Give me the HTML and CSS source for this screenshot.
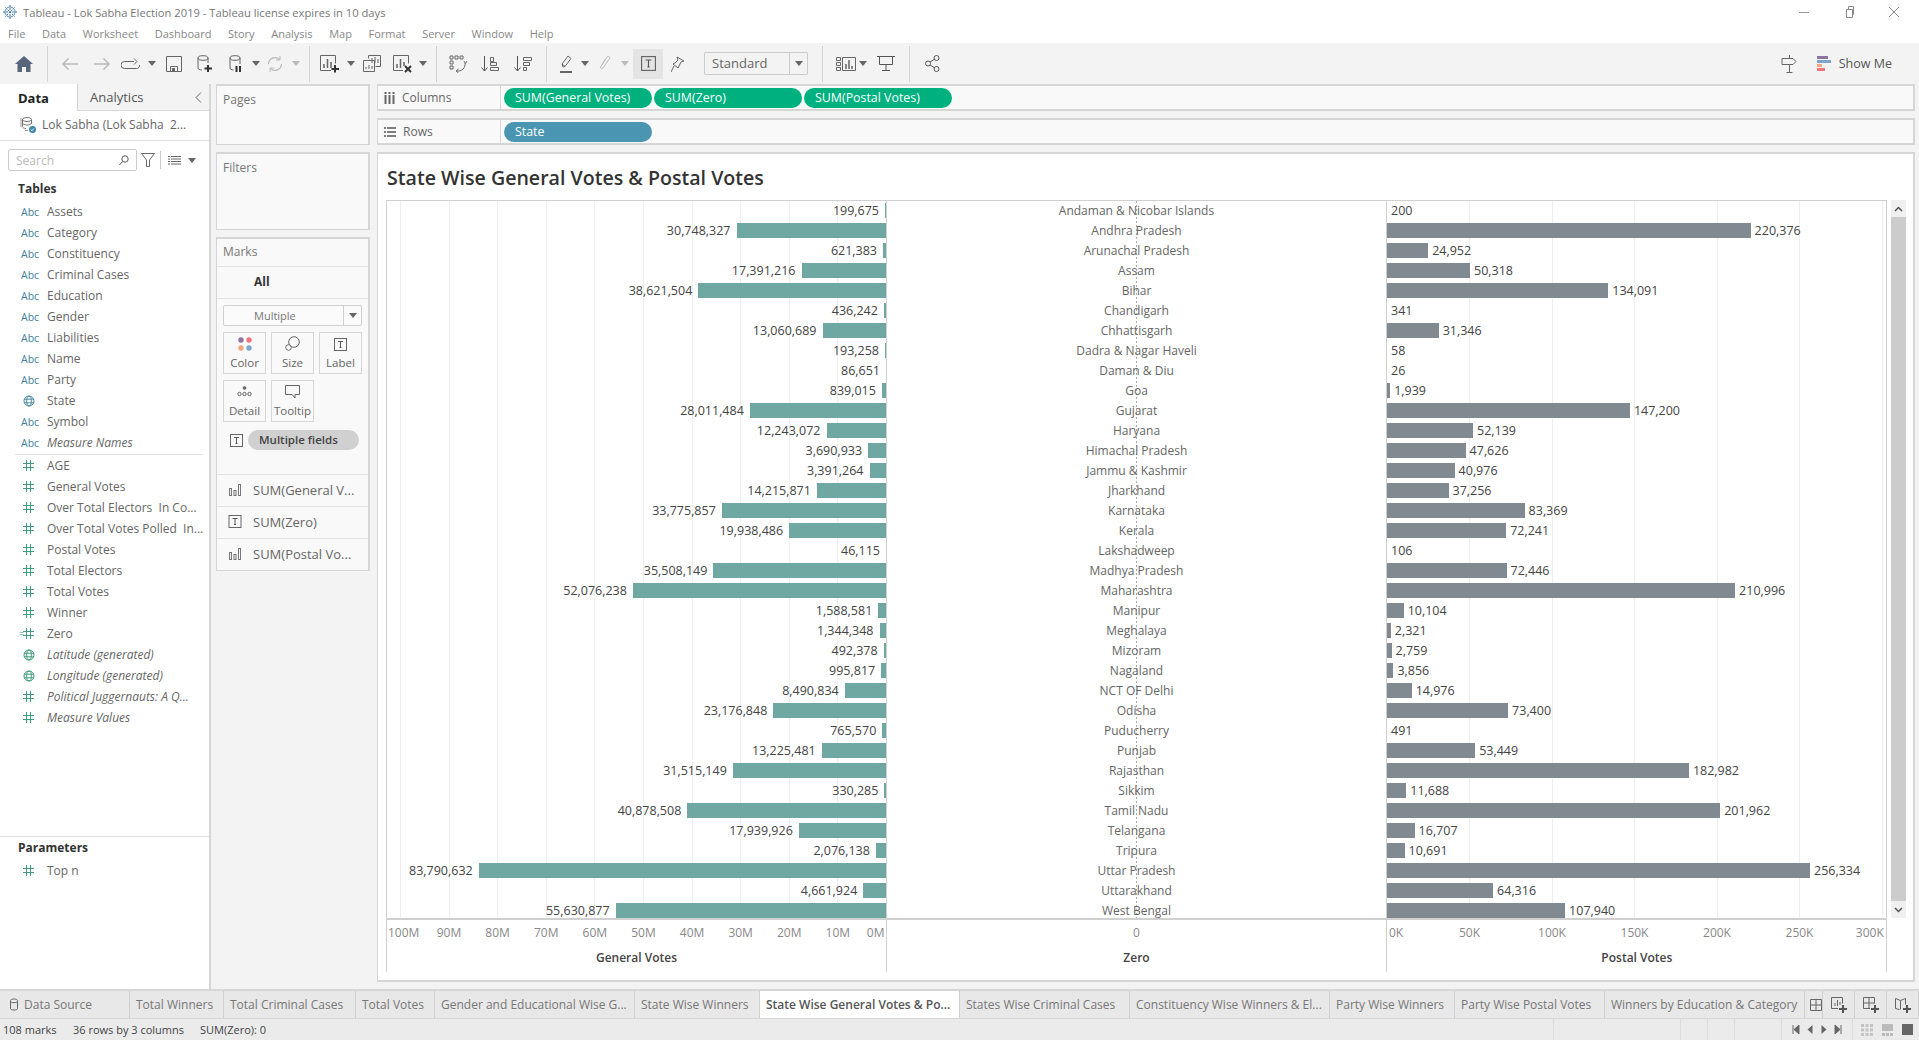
FILE: index.html
```html
<!DOCTYPE html>
<html>
<head lang="en">
    <meta charset="UTF-8">
    <title>Tableau - Lok Sabha Election 2019</title>
    <link rel="stylesheet" href="styles.css">
</head>
<body>
<svg class="defs" width="0" height="0">
    <symbol id="hash" viewBox="0 0 11 11"><path d="M3.5 0v11M7.5 0v11M0 3.5h11M0 7.5h11" fill="none" stroke="#3f9d7c"/></symbol>
    <symbol id="globe-b" viewBox="0 0 12 12"><g fill="none" stroke="#4b8aa5"><circle cx="6" cy="6" r="5"/><ellipse cx="6" cy="6" rx="2.3" ry="5"/><path d="M1 4.2h10M1 7.8h10"/></g></symbol>
    <symbol id="globe-g" viewBox="0 0 12 12"><g fill="none" stroke="#3f9d7c"><circle cx="6" cy="6" r="5"/><ellipse cx="6" cy="6" rx="2.3" ry="5"/><path d="M1 4.2h10M1 7.8h10"/></g></symbol>
    <symbol id="caret" viewBox="0 0 8 5"><path d="M0 0h8L4 5z" fill="#666"/></symbol>
    <symbol id="caret-off" viewBox="0 0 8 5"><path d="M0 0h8L4 5z" fill="#bbb"/></symbol>
    <symbol id="tbox" viewBox="0 0 13 13"><rect x=".5" y=".5" width="12" height="12" fill="none" stroke="#666"/><path d="M4 3.5h5M6.5 3.5v6M5.5 9.5h2" fill="none" stroke="#555"/></symbol>
    <symbol id="bars" viewBox="0 0 12 12"><g fill="none" stroke="#777"><rect x=".5" y="4.5" width="2" height="7"/><rect x="5" y="6.5" width="2" height="5"/><rect x="9.5" y=".5" width="2" height="11"/></g></symbol>
</svg>

<div class="titlebar">
    <svg class="app-ico" width="14" height="14" viewBox="0 0 14 14"><path d="M7 0v14M0 7h14M2.500 2.500l9 9M11.500 2.500l-9 9" stroke="#3f6f9e" stroke-dasharray="2 1" fill="none"/><circle cx="7" cy="7" r="5" fill="none" stroke="#5a8fc0"/></svg>
    <span class="title-text">Tableau - Lok Sabha Election 2019 - Tableau license expires in 10 days</span>
    <div class="winbtns">
        <svg width="12" height="12" viewBox="0 0 12 12"><path d="M1 6.500h10" stroke="#999"/></svg>
        <svg width="12" height="12" viewBox="0 0 12 12"><path d="M3.500 3.500h6v8h-6zM5.500 3.500v-3h5v8h-1" fill="none" stroke="#888"/></svg>
        <svg width="12" height="12" viewBox="0 0 12 12"><path d="M1 1l10 10M11 1L1 11" stroke="#888" fill="none"/></svg>
    </div>
</div>
<div class="menubar">
    <span>File</span><span>Data</span><span>Worksheet</span><span>Dashboard</span><span>Story</span><span>Analysis</span><span>Map</span><span>Format</span><span>Server</span><span>Window</span><span>Help</span>
</div>

<div class="toolbar">
    <div class="tb w32"><svg width="18" height="16" viewBox="0 0 18 16"><path d="M9 0L0 8h2.500v8H7v-5h4v5h4.500V8H18z" fill="#56657a"/></svg></div>
    <div class="tb w14"><i class="sep"></i></div>
    <div class="tb w32"><svg width="18" height="14" viewBox="0 0 18 14"><path d="M17 7H2M7.500 1.500L2 7l5.500 5.500" fill="none" stroke="#bbb" stroke-width="1.600"/></svg></div>
    <div class="tb w32"><svg width="18" height="14" viewBox="0 0 18 14"><path d="M1 7h15M10.500 1.500L16 7l-5.500 5.500" fill="none" stroke="#bbb" stroke-width="1.600"/></svg></div>
    <div class="tb w26"><svg width="20" height="12" viewBox="0 0 20 12"><path d="M13 3.500H3.500a3 3 0 0 0 0 7h12a3 3 0 0 0 3-3.500M13 .5l3 3-3 3" fill="none" stroke="#666"/></svg></div>
    <div class="tb w16"><svg class="car"><use href="#caret"/></svg></div>
    <div class="tb w28"><svg width="16" height="16" viewBox="0 0 16 16"><path d="M.5.5h15v15H.5zM4.500 15.500v-5h7v5" fill="none" stroke="#666"/><rect x="6" y="12" width="3" height="3" fill="#666"/></svg></div>
    <div class="tb w34"><svg width="16" height="18" viewBox="0 0 16 18"><path d="M1 3v10c0 1.200 2 2 4 2M11 3v5" fill="none" stroke="#666"/><ellipse cx="6" cy="3" rx="5" ry="2.300" fill="none" stroke="#666"/><path d="M11 10v7M7.500 13.500h7.500" stroke="#333" stroke-width="2"/></svg></div>
    <div class="tb w28"><svg width="14" height="18" viewBox="0 0 14 18"><path d="M1 3v10c0 1.200 1.500 2 3.500 2M11 3v6" fill="none" stroke="#666"/><ellipse cx="6" cy="3" rx="5" ry="2.300" fill="none" stroke="#666"/><path d="M7.500 11v6M11 11v6" stroke="#333" stroke-width="2"/></svg></div>
    <div class="tb w12"><svg class="car"><use href="#caret"/></svg></div>
    <div class="tb w26"><svg width="18" height="18" viewBox="0 0 18 18"><path d="M2.500 9a6.500 6.500 0 0 1 11-4.500M15.500 9a6.500 6.500 0 0 1-11 4.500" fill="none" stroke="#bbb" stroke-width="1.300"/><path d="M14 1v4h-4M4 17v-4h4" fill="none" stroke="#bbb"/></svg></div>
    <div class="tb w16"><svg class="car"><use href="#caret-off"/></svg></div>
    <div class="tb w10"><i class="sep"></i></div>
    <div class="tb w32"><svg width="20" height="18" viewBox="0 0 20 18"><path d="M.5 15.500v-15h15v8M11 15.500H.5" fill="none" stroke="#666"/><path d="M4 13V9M7.500 13V4M11 13V7" stroke="#666" stroke-width="1.500"/><path d="M15 10v7.500M11.500 14h7.500" stroke="#333" stroke-width="2"/></svg></div>
    <div class="tb w10"><svg class="car"><use href="#caret"/></svg></div>
    <div class="tb w32"><svg width="18" height="17" viewBox="0 0 18 17"><path d="M5.500 3.500v-3h12v11h-5M.5 5.500h11v11H.5z" fill="none" stroke="#666"/><path d="M9 8V3M12 8V2M15 8V4M3 14v-2M6 14v-4M9 14v-3" stroke="#666"/></svg></div>
    <div class="tb w30"><svg width="20" height="18" viewBox="0 0 20 18"><path d="M.5 15.500v-15h15v8M10 15.500H.5" fill="none" stroke="#666"/><path d="M4 13V9M7.500 13V4M11 11V7" stroke="#666" stroke-width="1.500"/><path d="M12 11l6 6M18 11l-6 6" stroke="#333" stroke-width="2"/></svg></div>
    <div class="tb w10"><svg class="car"><use href="#caret"/></svg></div>
    <div class="tb w16"><i class="sep"></i></div>
    <div class="tb w28"><svg width="18" height="18" viewBox="0 0 18 18"><path d="M1 1h3v3H1zM6 1h3v3H6zM11 1h3v3h-3zM1 6h3v3H1zM1 11h3v3H1z" fill="none" stroke="#666"/><path d="M16 8a7 7 0 0 1-8 8M15 6l1.500 2.500L18 6M9.500 14L7 16l2.500 2" fill="none" stroke="#666"/></svg></div>
    <div class="tb w36"><svg width="18" height="16" viewBox="0 0 18 16"><path d="M3.500 0v15M.5 11.500l3 3.500 3-3.500" fill="none" stroke="#555"/><path d="M9.500 1.500h3v4h-3zM9.500 6.500h6v3h-6zM9.500 11.500h8v3h-8z" fill="none" stroke="#666"/></svg></div>
    <div class="tb w30"><svg width="18" height="16" viewBox="0 0 18 16"><path d="M3.500 0v15M.5 11.500l3 3.500 3-3.500" fill="none" stroke="#555"/><path d="M9.500 1.500h8v3h-8zM9.500 6.500h6v3h-6zM9.500 11.500h3v3h-3z" fill="none" stroke="#666"/></svg></div>
    <div class="tb w16"><i class="sep"></i></div>
    <div class="tb w26"><svg width="14" height="18" viewBox="0 0 14 18"><path d="M3 12l-1-3 6-8 3 2.500-6 8zM2 9l3 2.500" fill="none" stroke="#666"/><path d="M0 17h12" stroke="#666" stroke-width="2"/></svg></div>
    <div class="tb w10"><svg class="car"><use href="#caret"/></svg></div>
    <div class="tb w30"><svg width="12" height="17" viewBox="0 0 12 17"><path d="M3 10l5-8c1-1.500 3.500 0 2.500 1.500L4 13c-1 1.500-3 .5-2.500-1l5-8" fill="none" stroke="#bbb"/></svg></div>
    <div class="tb w10"><svg class="car"><use href="#caret-off"/></svg></div>
    <div class="tb tb-sel"><svg width="15" height="15"><use href="#tbox"/></svg></div>
    <div class="tb w29"><svg width="14" height="16" viewBox="0 0 14 16"><path d="M6 1l7 4-3 1-2 4-1 2-5-4 2-1 3-3zM3 10l-3 6" fill="none" stroke="#666"/></svg></div>
    <div class="standard"><span class="std-label">Standard</span><span class="std-arrow"><svg class="car"><use href="#caret"/></svg></span></div>
    <div class="tb w28"><i class="sep"></i></div>
    <div class="tb w20"><svg width="20" height="14" viewBox="0 0 20 14"><path d="M.5.5h4v3h-4zM.5 5.500h4v3h-4zM.5 10.500h4v3h-4zM6.500.5h13v13h-13z" fill="none" stroke="#666"/><path d="M10 12V7M13 12V3M16 12V9" stroke="#666" stroke-width="1.500"/></svg></div>
    <div class="tb w14"><svg class="car"><use href="#caret"/></svg></div>
    <div class="tb w32"><svg width="18" height="15" viewBox="0 0 18 15"><path d="M0 .5h18M2.500 .5v8h13v-8M9 8.500v6M5 14.500h8" fill="none" stroke="#555"/></svg></div>
    <div class="tb w14"><i class="sep"></i></div>
    <div class="tb w32"><svg width="15" height="17" viewBox="0 0 15 17"><circle cx="3" cy="8.500" r="2.500" fill="none" stroke="#555"/><circle cx="11.500" cy="3" r="2.500" fill="none" stroke="#555"/><circle cx="11.500" cy="14" r="2.500" fill="none" stroke="#555"/><path d="M5 7l4.500-2.800M5 10l4.500 2.800" stroke="#555"/></svg></div>
    <div class="tb-right">
        <svg class="signpost" width="18" height="18" viewBox="0 0 18 18"><path d="M8.500 0v3M1 3.500h11l3 3-3 3H1zM8.500 9.500V17M5.500 17.500h6" fill="none" stroke="#666"/></svg>
        <svg class="showme-ico" width="14" height="15" viewBox="0 0 14 15"><rect width="11" height="3" fill="#8d74a2"/><rect y="4" width="14" height="3" fill="#7da5cf"/><rect y="8" width="5" height="3" fill="#f4a582"/><rect y="12" width="8" height="3" fill="#f4747b"/></svg>
        <span class="showme">Show Me</span>
    </div>
</div>

<div class="main">
    <div class="sidebar">
        <div class="side-tabs">
            <div class="side-tab on">Data</div>
            <div class="side-tab">Analytics<svg class="collapse" width="7" height="11" viewBox="0 0 7 11"><path d="M6 .5l-5 5 5 5" fill="none" stroke="#666"/></svg></div>
        </div>
        <div class="source">
            <svg width="16" height="17" viewBox="0 0 16 17"><ellipse cx="7" cy="3.500" rx="4.500" ry="2" fill="none" stroke="#777"/><path d="M2.500 3.500v7c0 1 1.500 2 3.500 2M11.500 3.500V8M2.500 7c0 1 2 2 4.500 2s4.500-1 4.500-2" fill="none" stroke="#777"/><path d="M1 2v9M5 14.500h3" stroke="#999" fill="none"/><circle cx="12.500" cy="13.500" r="3.500" fill="#3f86ad"/><path d="M10.800 13.500l1.200 1.200 2-2.200" stroke="#fff" fill="none"/></svg>
            <span>Lok Sabha (Lok Sabha&nbsp; 2...</span>
        </div>
        <div class="search-row">
            <div class="search"><span>Search</span><svg width="10" height="11" viewBox="0 0 10 11"><circle cx="6" cy="4" r="3.200" fill="none" stroke="#555"/><path d="M3.500 6.500L.5 10" stroke="#555"/></svg></div>
            <svg class="filter" width="14" height="14" viewBox="0 0 14 14"><path d="M.5.5h13L8.500 7v6.500h-3V7z" fill="none" stroke="#666"/></svg>
            <i class="search-sep"></i>
            <svg class="listico" width="13" height="9" viewBox="0 0 13 9"><path d="M0 .5h2M3 .5h10M0 3h2M3 3h10M0 5.500h2M3 5.500h10M0 8h2M3 8h10" stroke="#666"/></svg>
            <svg class="car"><use href="#caret"/></svg>
        </div>
        <div class="side-head">Tables</div>
        <div class="fields dims">
            <div class="field"><span class="abc">Abc</span>Assets</div>
            <div class="field"><span class="abc">Abc</span>Category</div>
            <div class="field"><span class="abc">Abc</span>Constituency</div>
            <div class="field"><span class="abc">Abc</span>Criminal Cases</div>
            <div class="field"><span class="abc">Abc</span>Education</div>
            <div class="field"><span class="abc">Abc</span>Gender</div>
            <div class="field"><span class="abc">Abc</span>Liabilities</div>
            <div class="field"><span class="abc">Abc</span>Name</div>
            <div class="field"><span class="abc">Abc</span>Party</div>
            <div class="field"><span class="ico"><svg class="globe"><use href="#globe-b"/></svg></span>State</div>
            <div class="field"><span class="abc">Abc</span>Symbol</div>
            <div class="field gen"><span class="abc">Abc</span>Measure Names</div>
        </div>
        <div class="fields">
            <div class="field"><span class="ico"><svg class="hash"><use href="#hash"/></svg></span>AGE</div>
            <div class="field"><span class="ico"><svg class="hash"><use href="#hash"/></svg></span>General Votes</div>
            <div class="field"><span class="ico"><svg class="hash"><use href="#hash"/></svg></span>Over Total Electors&nbsp; In Co...</div>
            <div class="field"><span class="ico"><svg class="hash"><use href="#hash"/></svg></span>Over Total Votes Polled&nbsp; In...</div>
            <div class="field"><span class="ico"><svg class="hash"><use href="#hash"/></svg></span>Postal Votes</div>
            <div class="field"><span class="ico"><svg class="hash"><use href="#hash"/></svg></span>Total Electors</div>
            <div class="field"><span class="ico"><svg class="hash"><use href="#hash"/></svg></span>Total Votes</div>
            <div class="field"><span class="ico"><svg class="hash"><use href="#hash"/></svg></span>Winner</div>
            <div class="field"><span class="ico calc"><svg class="hash"><use href="#hash"/></svg></span>Zero</div>
            <div class="field gen"><span class="ico"><svg class="globe"><use href="#globe-g"/></svg></span>Latitude (generated)</div>
            <div class="field gen"><span class="ico"><svg class="globe"><use href="#globe-g"/></svg></span>Longitude (generated)</div>
            <div class="field gen"><span class="ico"><svg class="hash"><use href="#hash"/></svg></span>Political Juggernauts: A Q...</div>
            <div class="field gen"><span class="ico"><svg class="hash"><use href="#hash"/></svg></span>Measure Values</div>
        </div>
        <div class="params">
            <div class="side-head">Parameters</div>
            <div class="field"><span class="ico"><svg class="hash"><use href="#hash"/></svg></span>Top n</div>
        </div>
    </div>

    <div class="cards">
        <div class="card pages"><div class="card-title">Pages</div></div>
        <div class="card filters"><div class="card-title">Filters</div></div>
        <div class="card marks">
            <div class="marks-head">Marks</div>
            <div class="marks-all">All</div>
            <div class="marks-body">
                <div class="marktype"><span>Multiple</span><i><svg class="car"><use href="#caret"/></svg></i></div>
                <div class="markbtns">
                    <div class="markbtn"><svg width="14" height="14" viewBox="0 0 14 14"><circle cx="3" cy="3" r="2.700" fill="#8d74a2"/><circle cx="11" cy="3" r="2.700" fill="#f4747b"/><circle cx="3" cy="11" r="2.700" fill="#f4a582"/><circle cx="11" cy="11" r="2.700" fill="#7da5cf"/></svg><span>Color</span></div>
                    <div class="markbtn"><svg width="15" height="15" viewBox="0 0 15 15"><circle cx="9" cy="6" r="5.300" fill="none" stroke="#666"/><circle cx="3.500" cy="11.500" r="2.800" fill="#fff" stroke="#666"/></svg><span>Size</span></div>
                    <div class="markbtn"><svg width="13" height="13"><use href="#tbox"/></svg><span>Label</span></div>
                    <div class="markbtn"><svg width="15" height="14" viewBox="0 0 15 14"><circle cx="7.500" cy="3" r="1.800" fill="#666"/><g fill="none" stroke="#666"><circle cx="2.500" cy="9" r="1.700"/><circle cx="7.500" cy="9" r="1.700"/><circle cx="12.500" cy="9" r="1.700"/></g></svg><span>Detail</span></div>
                    <div class="markbtn"><svg width="15" height="14" viewBox="0 0 15 14"><path d="M.5.5h14v9H10v3.500L7 9.500H.5z" fill="none" stroke="#666"/></svg><span>Tooltip</span></div>
                </div>
                <div class="pillrow"><svg width="13" height="13"><use href="#tbox"/></svg><span class="grey-pill">Multiple fields</span></div>
            </div>
            <div class="markcard"><svg height="12"><use href="#bars"/></svg>SUM(General V...</div>
            <div class="markcard"><svg height="13"><use href="#tbox"/></svg>SUM(Zero)</div>
            <div class="markcard"><svg height="12"><use href="#bars"/></svg>SUM(Postal Vo...</div>
        </div>
    </div>

    <div class="workspace">
        <div class="shelf">
            <div class="shelf-label"><svg width="11" height="12" viewBox="0 0 11 12"><path d="M1.500 3v9M5.500 3v9M9.500 3v9M1.500 0v2M5.500 0v2M9.500 0v2" stroke="#666" stroke-width="2"/></svg>Columns</div>
            <div class="pill green">SUM(General Votes)</div>
            <div class="pill green">SUM(Zero)</div>
            <div class="pill green">SUM(Postal Votes)</div>
        </div>
        <div class="shelf">
            <div class="shelf-label"><svg width="12" height="10" viewBox="0 0 12 10"><path d="M0 1h2M3 1h9M0 5h2M3 5h9M0 9h2M3 9h9" stroke="#555" stroke-width="1.500"/></svg>Rows</div>
            <div class="pill blue">State</div>
        </div>
        <div class="sheet">
            <div class="sheet-title">State Wise General Votes &amp; Postal Votes</div>
            <div class="chart">
                <div class="viz">
                    <div class="plot">
                        <div class="pane pane-gen">
                            <div class="row"><span>199,675</span><b style="width:1px"></b></div>
                            <div class="row"><span>30,748,327</span><b style="width:149.5px"></b></div>
                            <div class="row"><span>621,383</span><b style="width:3px"></b></div>
                            <div class="row"><span>17,391,216</span><b style="width:84.5px"></b></div>
                            <div class="row"><span>38,621,504</span><b style="width:187.7px"></b></div>
                            <div class="row"><span>436,242</span><b style="width:2.1px"></b></div>
                            <div class="row"><span>13,060,689</span><b style="width:63.5px"></b></div>
                            <div class="row"><span>193,258</span><b style="width:1px"></b></div>
                            <div class="row"><span>86,651</span><b style="width:0"></b></div>
                            <div class="row"><span>839,015</span><b style="width:4.1px"></b></div>
                            <div class="row"><span>28,011,484</span><b style="width:136.2px"></b></div>
                            <div class="row"><span>12,243,072</span><b style="width:59.5px"></b></div>
                            <div class="row"><span>3,690,933</span><b style="width:17.9px"></b></div>
                            <div class="row"><span>3,391,264</span><b style="width:16.5px"></b></div>
                            <div class="row"><span>14,215,871</span><b style="width:69.1px"></b></div>
                            <div class="row"><span>33,775,857</span><b style="width:164.2px"></b></div>
                            <div class="row"><span>19,938,486</span><b style="width:96.9px"></b></div>
                            <div class="row"><span>46,115</span><b style="width:0"></b></div>
                            <div class="row"><span>35,508,149</span><b style="width:172.6px"></b></div>
                            <div class="row"><span>52,076,238</span><b style="width:253.1px"></b></div>
                            <div class="row"><span>1,588,581</span><b style="width:7.7px"></b></div>
                            <div class="row"><span>1,344,348</span><b style="width:6.5px"></b></div>
                            <div class="row"><span>492,378</span><b style="width:2.4px"></b></div>
                            <div class="row"><span>995,817</span><b style="width:4.8px"></b></div>
                            <div class="row"><span>8,490,834</span><b style="width:41.3px"></b></div>
                            <div class="row"><span>23,176,848</span><b style="width:112.7px"></b></div>
                            <div class="row"><span>765,570</span><b style="width:3.7px"></b></div>
                            <div class="row"><span>13,225,481</span><b style="width:64.3px"></b></div>
                            <div class="row"><span>31,515,149</span><b style="width:153.2px"></b></div>
                            <div class="row"><span>330,285</span><b style="width:1.6px"></b></div>
                            <div class="row"><span>40,878,508</span><b style="width:198.7px"></b></div>
                            <div class="row"><span>17,939,926</span><b style="width:87.2px"></b></div>
                            <div class="row"><span>2,076,138</span><b style="width:10.1px"></b></div>
                            <div class="row"><span>83,790,632</span><b style="width:407.3px"></b></div>
                            <div class="row"><span>4,661,924</span><b style="width:22.7px"></b></div>
                            <div class="row"><span>55,630,877</span><b style="width:270.4px"></b></div>
                        </div>
                        <div class="pane pane-zero">
                            <div class="row">Andaman &amp; Nicobar Islands</div>
                            <div class="row">Andhra Pradesh</div>
                            <div class="row">Arunachal Pradesh</div>
                            <div class="row">Assam</div>
                            <div class="row">Bihar</div>
                            <div class="row">Chandigarh</div>
                            <div class="row">Chhattisgarh</div>
                            <div class="row">Dadra &amp; Nagar Haveli</div>
                            <div class="row">Daman &amp; Diu</div>
                            <div class="row">Goa</div>
                            <div class="row">Gujarat</div>
                            <div class="row">Haryana</div>
                            <div class="row">Himachal Pradesh</div>
                            <div class="row">Jammu &amp; Kashmir</div>
                            <div class="row">Jharkhand</div>
                            <div class="row">Karnataka</div>
                            <div class="row">Kerala</div>
                            <div class="row">Lakshadweep</div>
                            <div class="row">Madhya Pradesh</div>
                            <div class="row">Maharashtra</div>
                            <div class="row">Manipur</div>
                            <div class="row">Meghalaya</div>
                            <div class="row">Mizoram</div>
                            <div class="row">Nagaland</div>
                            <div class="row">NCT OF Delhi</div>
                            <div class="row">Odisha</div>
                            <div class="row">Puducherry</div>
                            <div class="row">Punjab</div>
                            <div class="row">Rajasthan</div>
                            <div class="row">Sikkim</div>
                            <div class="row">Tamil Nadu</div>
                            <div class="row">Telangana</div>
                            <div class="row">Tripura</div>
                            <div class="row">Uttar Pradesh</div>
                            <div class="row">Uttarakhand</div>
                            <div class="row">West Bengal</div>
                        </div>
                        <div class="pane pane-post">
                            <div class="row"><b style="width:0"></b><span>200</span></div>
                            <div class="row"><b style="width:363.6px"></b><span>220,376</span></div>
                            <div class="row"><b style="width:41.2px"></b><span>24,952</span></div>
                            <div class="row"><b style="width:83px"></b><span>50,318</span></div>
                            <div class="row"><b style="width:221.3px"></b><span>134,091</span></div>
                            <div class="row"><b style="width:0"></b><span>341</span></div>
                            <div class="row"><b style="width:51.7px"></b><span>31,346</span></div>
                            <div class="row"><b style="width:0"></b><span>58</span></div>
                            <div class="row"><b style="width:0"></b><span>26</span></div>
                            <div class="row"><b style="width:3.2px"></b><span>1,939</span></div>
                            <div class="row"><b style="width:242.9px"></b><span>147,200</span></div>
                            <div class="row"><b style="width:86px"></b><span>52,139</span></div>
                            <div class="row"><b style="width:78.6px"></b><span>47,626</span></div>
                            <div class="row"><b style="width:67.6px"></b><span>40,976</span></div>
                            <div class="row"><b style="width:61.5px"></b><span>37,256</span></div>
                            <div class="row"><b style="width:137.6px"></b><span>83,369</span></div>
                            <div class="row"><b style="width:119.2px"></b><span>72,241</span></div>
                            <div class="row"><b style="width:0"></b><span>106</span></div>
                            <div class="row"><b style="width:119.5px"></b><span>72,446</span></div>
                            <div class="row"><b style="width:348.1px"></b><span>210,996</span></div>
                            <div class="row"><b style="width:16.7px"></b><span>10,104</span></div>
                            <div class="row"><b style="width:3.8px"></b><span>2,321</span></div>
                            <div class="row"><b style="width:4.6px"></b><span>2,759</span></div>
                            <div class="row"><b style="width:6.4px"></b><span>3,856</span></div>
                            <div class="row"><b style="width:24.7px"></b><span>14,976</span></div>
                            <div class="row"><b style="width:121.1px"></b><span>73,400</span></div>
                            <div class="row"><b style="width:0"></b><span>491</span></div>
                            <div class="row"><b style="width:88.2px"></b><span>53,449</span></div>
                            <div class="row"><b style="width:301.9px"></b><span>182,982</span></div>
                            <div class="row"><b style="width:19.3px"></b><span>11,688</span></div>
                            <div class="row"><b style="width:333.2px"></b><span>201,962</span></div>
                            <div class="row"><b style="width:27.6px"></b><span>16,707</span></div>
                            <div class="row"><b style="width:17.6px"></b><span>10,691</span></div>
                            <div class="row"><b style="width:423px"></b><span>256,334</span></div>
                            <div class="row"><b style="width:106.1px"></b><span>64,316</span></div>
                            <div class="row"><b style="width:178.1px"></b><span>107,940</span></div>
                        </div>
                    </div>
                    <div class="axes">
                        <div class="axis">
                            <div class="ticks ticks-gen"><span class="first">100M</span><span>90M</span><span>80M</span><span>70M</span><span>60M</span><span>50M</span><span>40M</span><span>30M</span><span>20M</span><span>10M</span><span class="last">0M</span></div>
                            <div class="axis-title">General Votes</div>
                        </div>
                        <div class="axis">
                            <div class="ticks ticks-zero"><span>0</span></div>
                            <div class="axis-title">Zero</div>
                        </div>
                        <div class="axis">
                            <div class="ticks ticks-post"><span class="first">0K</span><span>50K</span><span>100K</span><span>150K</span><span>200K</span><span>250K</span><span class="last">300K</span></div>
                            <div class="axis-title">Postal Votes</div>
                        </div>
                    </div>
                </div>
                <div class="scroll">
                    <div class="scroll-btn"><svg width="9" height="6" viewBox="0 0 9 6"><path d="M1 5l3.500-3.500L8 5" fill="none" stroke="#555" stroke-width="1.500"/></svg></div>
                    <div class="scroll-thumb"></div>
                    <div class="scroll-btn"><svg width="9" height="6" viewBox="0 0 9 6"><path d="M1 1l3.500 3.500L8 1" fill="none" stroke="#555" stroke-width="1.500"/></svg></div>
                </div>
            </div>
        </div>
    </div>
</div>

<div class="tabbar">
    <div class="tab t130"><svg width="8" height="13" viewBox="0 0 8 13"><path d="M.5 2.500v8c0 2 7 2 7 0v-8c0-2-7-2-7 0zM.5 3.500c0 1.500 7 1.500 7 0" fill="none" stroke="#666"/></svg>Data Source</div>
    <div class="tab t94">Total Winners</div>
    <div class="tab t132">Total Criminal Cases</div>
    <div class="tab t79">Total Votes</div>
    <div class="tab t200">Gender and Educational Wise G...</div>
    <div class="tab t125">State Wise Winners</div>
    <div class="tab t200 active">State Wise General Votes &amp; Po...</div>
    <div class="tab t170">States Wise Criminal Cases</div>
    <div class="tab t200">Constituency Wise Winners &amp; El...</div>
    <div class="tab t125">Party Wise Winners</div>
    <div class="tab t150">Party Wise Postal Votes</div>
    <div class="tab t200">Winners by Education &amp; Category</div>
    <div class="tab-ico t18"><svg width="12" height="12" viewBox="0 0 12 12"><path d="M.5.5h11v11H.5zM.5 6h11M6 .5v11" fill="none" stroke="#666"/></svg></div>
    <div class="tab-ico t32"><svg width="16" height="16" viewBox="0 0 16 16"><path d="M.5 11.500V.5h11v6M7 11.500H.5" fill="none" stroke="#666"/><path d="M4 9V6M6.500 9V3M9 8V5" stroke="#666"/><path d="M12 8v8M8 12h8" stroke="#555" stroke-width="2"/></svg></div>
    <div class="tab-ico t32"><svg width="16" height="16" viewBox="0 0 16 16"><path d="M.5 11.500V.5h11v6M7 11.500H.5M.5 6h11M6 .5v11" fill="none" stroke="#666"/><path d="M12 8v8M8 12h8" stroke="#555" stroke-width="2"/></svg></div>
    <div class="tab-ico t32"><svg width="16" height="16" viewBox="0 0 16 16"><path d="M.5 1.500l5 2 5-2v6M.5 1.500v10l4 1M5.500 3.500v9" fill="none" stroke="#666"/><path d="M12 8v8M8 12h8" stroke="#555" stroke-width="2"/></svg></div>
</div>

<div class="statusbar">
    <span class="st-a">108 marks</span><span class="st-b">36 rows by 3 columns</span><span>SUM(Zero): 0</span>
    <div class="st-right">
        <i class="st-cell w127"></i><i class="st-cell w27"></i><i class="st-cell w27"></i><i class="st-cell w47"></i>
        <div class="st-nav">
            <svg width="8" height="9" viewBox="0 0 8 9"><path d="M1 0v9M7 0v9L2 4.500z" stroke="#666" fill="#666"/></svg>
            <svg width="6" height="9" viewBox="0 0 6 9"><path d="M5.500 0v9L.5 4.500z" fill="#666"/></svg>
            <svg width="6" height="9" viewBox="0 0 6 9"><path d="M.5 0v9l5-4.500z" fill="#666"/></svg>
            <svg width="8" height="9" viewBox="0 0 8 9"><path d="M7 0v9M1 0v9l5-4.500z" stroke="#666" fill="#666"/></svg>
        </div>
        <div class="st-views">
            <svg width="12" height="12" viewBox="0 0 12 12"><path d="M0 1.500h12M0 6h12M0 10.500h12" stroke="#c4c4c4" stroke-width="3" stroke-dasharray="3 1.500"/></svg>
            <svg width="11" height="12" viewBox="0 0 11 12"><rect width="11" height="7" fill="#bbb"/><path d="M0 10.500h11" stroke="#bbb" stroke-width="3" stroke-dasharray="3 1"/></svg>
            <svg width="11" height="11" viewBox="0 0 11 11"><rect width="11" height="11" fill="#666"/></svg>
        </div>
    </div>
</div>
</body>
</html>
```

FILE: styles.css
```css
* {
    margin: 0;
    padding: 0;
    box-sizing: border-box;
}

html, body {
    width: 1919px;
    height: 1040px;
    overflow: hidden;
}

body {
    display: flex;
    flex-direction: column;
    background: #fff;
    color: #555;
    font: 12px "Open Sans", "Liberation Sans", sans-serif;
}

svg {
    display: block;
    flex: none;
}

i {
    display: block;
    font-style: normal;
}

.defs {
    position: absolute;
}

.car {
    width: 8px;
    height: 5px;
}

/* title + menu */
.titlebar {
    height: 24px;
    display: flex;
    align-items: center;
    padding-left: 3px;
    color: #777;
}

.title-text {
    margin-left: 6px;
    font-size: 11.200px;
}

.winbtns {
    margin-left: auto;
    display: flex;
    gap: 33px;
    padding-right: 19px;
}

.menubar {
    height: 19px;
    display: flex;
    align-items: center;
    gap: 16.600px;
    padding-left: 8px;
    font-size: 11px;
    color: #888;
}

/* toolbar */
.toolbar {
    height: 41px;
    display: flex;
    align-items: center;
    padding-left: 8px;
    background: #f3f3f3;
}

.tb {
    height: 36px;
    display: flex;
    align-items: center;
    justify-content: center;
    flex: none;
}

.w10 { width: 10px; }
.w12 { width: 12px; }
.w14 { width: 14px; }
.w16 { width: 16px; }
.w20 { width: 20px; }
.w26 { width: 26px; }
.w28 { width: 28px; }
.w29 { width: 29px; }
.w30 { width: 30px; }
.w32 { width: 32px; }
.w34 { width: 34px; }
.w36 { width: 36px; }

.sep {
    width: 1px;
    height: 36px;
    background: #d4d4d4;
}

.tb-sel {
    width: 30px;
    height: 30px;
    margin-left: 3px;
    background: #e4e4e4;
}

.standard {
    width: 104px;
    height: 23px;
    margin-left: 12px;
    display: flex;
    border: 1px solid #ccc;
    border-radius: 2px;
    color: #666;
    font-size: 13px;
    line-height: 20px;
}

.std-label {
    flex: 1;
    padding-left: 7px;
}

.std-arrow {
    width: 18px;
    display: flex;
    align-items: center;
    justify-content: center;
    border-left: 1px solid #ccc;
}

.tb-right {
    margin-left: auto;
    display: flex;
    align-items: center;
    padding-right: 27px;
}

.showme-ico {
    margin-left: 18px;
}

.showme {
    margin-left: 8px;
    font-size: 12.500px;
    color: #555;
}

/* main area */
.main {
    height: 905px;
    display: flex;
    background: #f3f3f3;
}

.sidebar {
    width: 211px;
    flex: none;
    display: flex;
    flex-direction: column;
    background: #fff;
    border-right: 2px solid #d6d6d6;
}

.side-tabs {
    height: 27px;
    display: flex;
    font-size: 13px;
}

.side-tab {
    flex: 1;
    display: flex;
    align-items: center;
    padding-left: 12px;
    background: #f3f3f3;
    border-bottom: 1px solid #d6d6d6;
    color: #555;
}

.side-tab.on {
    flex: none;
    width: 78px;
    padding-left: 18px;
    background: #fff;
    color: #222;
    font-weight: 700;
    border-bottom: 0;
    border-right: 1px solid #d6d6d6;
}

.collapse {
    margin-left: auto;
    margin-right: 7px;
}

.source {
    height: 30px;
    display: flex;
    align-items: center;
    gap: 6px;
    padding: 0 0 2px 20px;
    border-bottom: 1px solid #e2e2e2;
    color: #666;
}

.search-row {
    height: 22px;
    margin-top: 8px;
    display: flex;
    align-items: center;
    padding-left: 8px;
}

.search {
    width: 129px;
    height: 22px;
    display: flex;
    align-items: center;
    justify-content: space-between;
    padding: 0 7px;
    border: 1px solid #ccc;
    border-radius: 2px;
    color: #bbb;
}

.filter {
    margin-left: 4px;
}

.search-sep {
    width: 1px;
    height: 18px;
    margin: 0 7px 0 5px;
    background: #ccc;
}

.listico {
    margin-right: 7px;
}

.side-head {
    height: 20px;
    margin-top: 8px;
    padding-left: 18px;
    line-height: 20px;
    font-weight: 700;
    color: #333;
}

.dims {
    padding-top: 2px;
    padding-bottom: 1px;
    margin: 0 6px 0 15px;
    border-bottom: 1px solid #e2e2e2;
}

.dims .field {
    margin-left: -15px;
}

.field {
    height: 21px;
    display: flex;
    align-items: center;
    color: #666;
    white-space: nowrap;
}

.gen {
    font-style: italic;
}

.abc {
    width: 26px;
    margin-left: 21px;
    font-size: 10.500px;
    font-style: normal;
    color: #3f7f9c;
}

.ico {
    width: 47px;
    display: flex;
    padding-left: 23px;
}

.hash {
    width: 11px;
    height: 11px;
}

.globe {
    width: 12px;
    height: 12px;
}

.calc::before {
    content: "=";
    width: 4px;
    margin-left: -4px;
    font-size: 9px;
    line-height: 11px;
    color: #3f9d7c;
}

.params {
    margin-top: auto;
    height: 153px;
    border-top: 1px solid #e2e2e2;
}

.params .side-head {
    margin-top: 1px;
    margin-bottom: 2px;
}

/* pages / filters / marks */
.cards {
    width: 154px;
    flex: none;
    margin-left: 5px;
    display: flex;
    flex-direction: column;
    gap: 7px;
}

.card {
    background: #f9f9f9;
    border: 1px solid #d6d6d6;
    border-top-width: 2px;
    border-right-width: 2px;
}

.card-title {
    padding: 5px 0 0 6px;
    color: #777;
}

.pages {
    height: 61px;
}

.filters {
    height: 78px;
}

.marks {
    height: 334px;
}

.marks-head {
    height: 28px;
    padding-left: 6px;
    line-height: 26px;
    color: #777;
    border-bottom: 1px solid #e2e2e2;
}

.marks-all {
    height: 32px;
    padding-left: 37px;
    line-height: 30px;
    font-weight: 700;
    color: #333;
    border-bottom: 1px solid #e2e2e2;
}

.marks-body {
    height: 175px;
    padding: 6px 6px 0;
}

.marktype {
    height: 21px;
    display: flex;
    justify-content: space-between;
    padding-left: 30px;
    font-size: 11px;
    line-height: 19px;
    background: #fbfbfb;
    border: 1px solid #d0d0d0;
    border-radius: 2px;
    color: #777;
}

.marktype i {
    width: 18px;
    display: flex;
    align-items: center;
    justify-content: center;
    border-left: 1px solid #d0d0d0;
}

.markbtns {
    margin-top: 6px;
    display: grid;
    grid-template-columns: repeat(3, 43px);
    grid-auto-rows: 42px;
    column-gap: 5px;
    row-gap: 6px;
}

.markbtn {
    display: flex;
    flex-direction: column;
    align-items: center;
    justify-content: flex-end;
    gap: 5px;
    padding-bottom: 3px;
    border: 1px solid #d6d6d6;
    font-size: 11.500px;
    line-height: 14px;
    color: #666;
}

.pillrow {
    margin-top: 8px;
    display: flex;
    align-items: center;
    gap: 5px;
    padding-left: 7px;
}

.grey-pill {
    width: 111px;
    height: 20px;
    padding-left: 11px;
    border-radius: 10px;
    font-size: 11.500px;
    line-height: 20px;
    background: #d0d0d0;
    color: #444;
    font-weight: 600;
}

.markcard {
    height: 32px;
    display: flex;
    align-items: center;
    padding-bottom: 2px;
    font-size: 13px;
    border-top: 1px solid #e2e2e2;
    color: #666;
    white-space: nowrap;
}

.markcard svg {
    width: 14px;
    margin: 0 11px;
}

/* shelves + sheet */
.workspace {
    width: 1538px;
    margin-left: 7px;
    display: flex;
    flex-direction: column;
    gap: 7px;
}

.shelf {
    height: 27px;
    display: flex;
    align-items: center;
    gap: 2px;
    background: #f9f9f9;
    border: 1px solid #d6d6d6;
    border-bottom-width: 2px;
    border-top-width: 2px;
    border-right-width: 2px;
}

.shelf-label {
    width: 123px;
    height: 100%;
    margin-right: 1px;
    display: flex;
    align-items: center;
    gap: 7px;
    padding-left: 6px;
    border-right: 1px solid #d6d6d6;
    color: #666;
}

.pill {
    width: 148px;
    height: 20px;
    padding-left: 11px;
    border-radius: 10px;
    font-size: 12.400px;
    line-height: 20px;
    color: #fff;
}

.green {
    background: #00b180;
}

.blue {
    background: #4a96b2;
}

.sheet {
    height: 830px;
    display: flex;
    flex-direction: column;
    background: #fff;
    border: 2px solid #d6d6d6;
    border-left-width: 1px;
}

.sheet-title {
    height: 46px;
    padding: 9px 0 0 9px;
    font-size: 19.600px;
    line-height: 30px;
    font-weight: 600;
    color: #333;
}

.chart {
    display: flex;
    align-items: flex-start;
    padding-left: 8px;
}

.viz {
    width: 1501px;
}

.plot {
    height: 720px;
    display: grid;
    grid-template-columns: 500px 500px 1fr;
    border-top: 1px solid #d0d0d0;
    border-bottom: 2px solid #d0d0d0;
    border-right: 1px solid #d0d0d0;
}

.pane {
    height: 717px;
    overflow: hidden;
    display: grid;
    grid-auto-rows: 20px;
    border-left: 1px solid #d0d0d0;
}

.pane-gen {
    background-image: repeating-linear-gradient(to right, transparent 13px, #eee 13px, #eee 14px, transparent 14px, transparent 61.610px);
}

.pane-zero {
    background-image: repeating-linear-gradient(to bottom, #aaa 0, #aaa 2px, transparent 2px, transparent 4px);
    background-size: 1px 100%;
    background-position: center;
    background-repeat: no-repeat;
}

.pane-post {
    background-image: repeating-linear-gradient(to right, transparent 82px, #eee 82px, #eee 83px, transparent 83px, transparent 164.500px);
}

.row {
    display: flex;
    align-items: center;
    padding-bottom: 1px;
    color: #444;
    white-space: nowrap;
}

.row span {
    font-size: 12.500px;
}

.row b {
    height: 15px;
    flex: none;
}

.pane-gen .row {
    justify-content: flex-end;
}

.pane-gen .row b {
    margin-left: 6px;
    background: #6fa8a2;
}

.pane-zero .row {
    justify-content: center;
    color: #666;
}

.pane-post .row b {
    margin-right: 4px;
    background: #828a91;
}

.axes {
    height: 52px;
    display: grid;
    grid-template-columns: 500px 500px 1fr;
    border-right: 1px solid #d0d0d0;
}

.axis {
    border-left: 1px solid #d0d0d0;
}

.ticks {
    height: 26px;
    display: flex;
    align-items: flex-end;
    color: #888;
    padding-bottom: 5px;
}

.ticks span {
    flex: none;
    text-align: center;
}

.ticks-gen span {
    width: 48.610px;
}

.ticks-gen .first {
    width: 37.700px;
    padding-left: 1px;
    text-align: left;
}

.ticks-gen .last {
    width: 24.300px;
    text-align: right;
    padding-right: 2px;
}

.ticks-zero {
    justify-content: center;
}

.ticks-post span {
    width: 82.500px;
}

.ticks-post .first {
    width: 41.250px;
    padding-left: 2px;
    text-align: left;
}

.ticks-post .last {
    width: 46px;
    text-align: right;
    padding-right: 3px;
}

.axis-title {
    margin-top: 4px;
    text-align: center;
    font-weight: 600;
    color: #444;
    line-height: 16px;
}

.scroll {
    width: 15px;
    height: 718px;
    margin-left: 4px;
    display: flex;
    flex-direction: column;
    background: #f0f0f0;
}

.scroll-btn {
    height: 17px;
    display: flex;
    align-items: center;
    justify-content: center;
}

.scroll-thumb {
    flex: 1;
    background: #ccc;
}

/* sheet tabs + status */
.tabbar {
    height: 30px;
    display: flex;
    background: #e8e8e8;
    border-top: 2px solid #d6d6d6;
    border-bottom: 1px solid #d6d6d6;
}

.tab {
    flex: none;
    display: flex;
    align-items: center;
    gap: 6px;
    padding-left: 6px;
    border-right: 1px solid #d0d0d0;
    color: #777;
    white-space: nowrap;
}

.tab.active {
    background: #fff;
    color: #555;
    font-weight: 600;
}

.t130 { width: 130px; padding-left: 10px; }
.t94 { width: 94px; }
.t132 { width: 132px; }
.t79 { width: 79px; }
.t200 { width: 200px; }
.t125 { width: 125px; }
.t170 { width: 170px; }
.t150 { width: 150px; }

.tab-ico {
    flex: none;
    display: flex;
    align-items: center;
    justify-content: center;
    border-right: 1px solid #d0d0d0;
}

.t18 { width: 18px; justify-content: flex-end; }
.t32 { width: 32px; }

.statusbar {
    flex: 1;
    display: flex;
    align-items: center;
    padding-left: 3px;
    background: #ebebeb;
    color: #444;
    font-size: 11px;
}

.st-a {
    width: 70px;
}

.st-b {
    width: 127px;
}

.st-right {
    margin-left: auto;
    height: 100%;
    display: flex;
}

.st-cell {
    border-left: 1px solid #dcdcdc;
}

.w127 { width: 127px; }
.w27 { width: 27px; }
.w47 { width: 47px; }

.st-nav {
    width: 71px;
    display: flex;
    align-items: center;
    justify-content: space-around;
    padding: 0 6px;
    border-left: 1px solid #dcdcdc;
}

.st-views {
    width: 67px;
    display: flex;
    align-items: center;
    gap: 9px;
    padding-left: 8px;
    border-left: 1px solid #dcdcdc;
}
```
